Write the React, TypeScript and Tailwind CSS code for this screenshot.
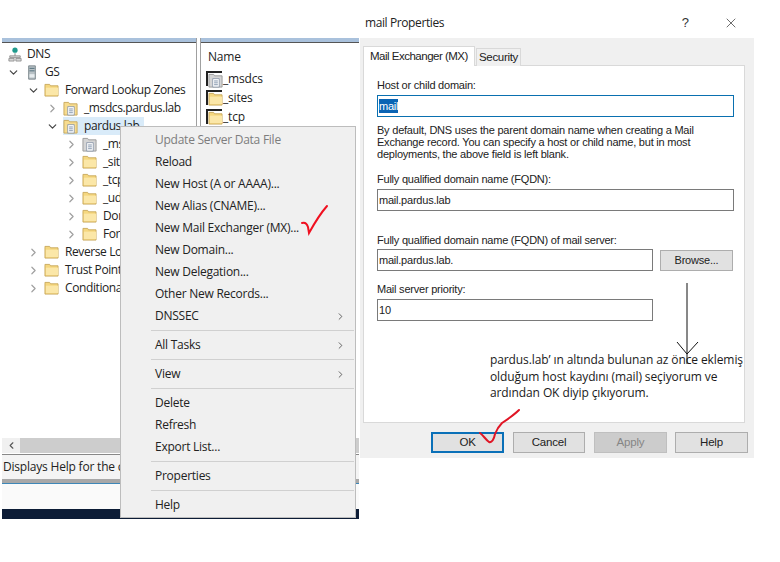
import { ChevronDown, ChevronRight, X } from "lucide-react";

const uiFont = "font-['Open_Sans',sans-serif]";

const Folder = ({ className = "" }: { className?: string }) => (
  <svg viewBox="0 0 16 15" className={`w-[15px] h-[14px] shrink-0 ${className}`}>
    <path d="M1 3V1.5h5L7 3h8v11H1z" fill="#f5d77f" stroke="#c9a95c" strokeWidth="1" />
    <path d="M2 5h13v8H2z" fill="#fbe7a8" />
  </svg>
);

const ZoneFolder = ({ grey = false }: { grey?: boolean }) => (
  <svg viewBox="0 0 16 16" className="w-[15px] h-[15px] shrink-0">
    <path d="M1 3V1.5h5L7 3h8v12H1z" fill={grey ? "#d5d5d5" : "#f7dc8f"} stroke={grey ? "#9a9a9a" : "#c9a95c"} />
    <path d="M5 6h7v9H5z" fill="#fff" stroke="#7f8ea3" strokeWidth="0.8" />
    <path d="M6.5 8.5h4M6.5 10.5h4M6.5 12.5h4" stroke="#5b7391" strokeWidth="0.8" />
  </svg>
);

const ServerIcon = () => (
  <svg viewBox="0 0 12 18" className="w-[10px] h-[17px] shrink-0">
    <path d="M2 1h8v16H2z" fill="#b9c2c6" stroke="#6e7a80" />
    <path d="M3 4h6M3 7h6" stroke="#3f5f6d" />
    <path d="M3 11h6v4H3z" fill="#e7ecee" />
  </svg>
);

const DnsIcon = () => (
  <svg viewBox="0 0 16 17" className="w-[14px] h-[15px] shrink-0">
    <circle cx="8" cy="3.5" r="3" fill="#1f9a8d" />
    <path d="M8 7v3" stroke="#777" />
    <path d="M2 10h12v2H2zM1 13h6v3H1zM9 13h6v3H9z" fill="#d6d6d6" stroke="#7b7b7b" strokeWidth="0.8" />
  </svg>
);

type Row = { label: string; indent: number; chevron: "open" | "closed" | "none"; icon: "dns" | "server" | "folder" | "zone" | "grey"; selected?: boolean };

const rows: Row[] = [
  { label: "GS", indent: 5, chevron: "open", icon: "server" },
  { label: "Forward Lookup Zones", indent: 25, chevron: "open", icon: "folder" },
  { label: "_msdcs.pardus.lab", indent: 44, chevron: "closed", icon: "zone" },
  { label: "pardus.lab", indent: 44, chevron: "open", icon: "zone", selected: true },
  { label: "_msdcs", indent: 63, chevron: "closed", icon: "grey" },
  { label: "_sites", indent: 63, chevron: "closed", icon: "folder" },
  { label: "_tcp", indent: 63, chevron: "closed", icon: "folder" },
  { label: "_udp", indent: 63, chevron: "closed", icon: "folder" },
  { label: "DomainDnsZones", indent: 63, chevron: "closed", icon: "folder" },
  { label: "ForestDnsZones", indent: 63, chevron: "closed", icon: "folder" },
  { label: "Reverse Lookup Zones", indent: 25, chevron: "closed", icon: "folder" },
  { label: "Trust Points", indent: 25, chevron: "closed", icon: "folder" },
  { label: "Conditional Forwarders", indent: 25, chevron: "closed", icon: "folder" },
];

const TreeRow = ({ row }: { row: Row }) => (
  <div className="flex h-[18px] items-center" style={{ paddingLeft: row.indent }}>
    <span className="w-[13px] shrink-0 mr-[4px]">
      {row.chevron === "open" && <ChevronDown size={13} strokeWidth={2.2} className="text-[#444]" />}
      {row.chevron === "closed" && <ChevronRight size={13} strokeWidth={2.2} className="text-[#a0a0a0]" />}
    </span>
    <span className={`flex items-center h-[18px] ${row.selected ? "bg-[#d9ebf9]" : ""} pr-[4px]`}>
      <span className="w-[15px] mr-[6px] flex justify-center">
        {row.icon === "server" && <ServerIcon />}
        {row.icon === "folder" && <Folder />}
        {row.icon === "zone" && <ZoneFolder />}
        {row.icon === "grey" && <ZoneFolder grey />}
      </span>
      <span className="text-[12px] tracking-[-0.4px] text-[#222] whitespace-nowrap">{row.label}</span>
    </span>
  </div>
);

type Item = { label: string; disabled?: boolean; arrow?: boolean; sep?: boolean };

const menu: Item[] = [
  { label: "Update Server Data File", disabled: true },
  { label: "Reload" },
  { label: "New Host (A or AAAA)..." },
  { label: "New Alias (CNAME)..." },
  { label: "New Mail Exchanger (MX)..." },
  { label: "New Domain..." },
  { label: "New Delegation..." },
  { label: "Other New Records..." },
  { label: "DNSSEC", arrow: true, sep: true },
  { label: "All Tasks", arrow: true, sep: true },
  { label: "View", arrow: true, sep: true },
  { label: "Delete" },
  { label: "Refresh" },
  { label: "Export List...", sep: true },
  { label: "Properties", sep: true },
  { label: "Help" },
];

const ContextMenu = () => (
  <div className="absolute left-[118px] top-[88px] w-[236px] h-[392px] bg-[#f0f0f0] border border-[#bdbdbd] pt-[2px]">
    {menu.map((item) => (
      <div key={item.label}>
        <div className={`flex h-[22px] items-center pl-[34px] pr-[9px] justify-between text-[12px] tracking-[-0.25px] ${item.disabled ? "text-[#7d7d7d]" : "text-[#222]"}`}>
          <span>{item.label}</span>
          {item.arrow && <ChevronRight size={11} strokeWidth={1.6} className="text-[#333]" />}
        </div>
        {item.sep && (
          <div className="flex h-[7px] items-center pl-[30px] pr-[1px]">
            <div className="h-px w-full bg-[#d0d0d0]" />
          </div>
        )}
      </div>
    ))}
  </div>
);

const MmcWindow = () => (
  <div className={`absolute left-[2px] top-[38px] w-[357px] h-[481px] flex flex-col ${uiFont}`}>
    <div className="flex h-[400px] shrink-0 gap-[3px]">
      <div className="w-[195px] border-r border-[#a0a0a0] bg-white flex flex-col">
        <div className="h-[5px] bg-[#a9c1dc] border-b border-[#555]" />
        <div className="pt-[2px] overflow-hidden">
          <div className="flex h-[18px] items-center pl-[6px]">
            <DnsIcon />
            <span className="ml-[5px] text-[12px] tracking-[-0.35px] text-[#222]">DNS</span>
          </div>
          {rows.map((r) => <TreeRow key={r.label} row={r} />)}
        </div>
      </div>
      <div className="flex-1 border-l border-[#a0a0a0] bg-white flex flex-col">
        <div className="h-[5px] bg-[#a9c1dc] border-b border-[#555]" />
        <div className="pl-[7px] pt-[5px] text-[12px] tracking-[-0.2px] text-[#222]">Name</div>
        <div className="pl-[5px] pt-[3px]">
          {["_msdcs", "_sites", "_tcp"].map((n) => (
            <div key={n} className="flex h-[19px] items-center gap-[1px]">
              <span className="w-[16px] h-[15px] border-l-[2px] border-t-[2px] border-[#222] flex">
                {n === "_msdcs" ? <ZoneFolder grey /> : <Folder />}
              </span>
              <span className="text-[12px] tracking-[-0.2px] text-[#222]">{n}</span>
            </div>
          ))}
        </div>
      </div>
    </div>
    <div className="h-[15px] shrink-0 bg-[#cdcdcd] flex">
      <div className="w-[18px] bg-[#f0f0f0] flex items-center justify-center">
        <ChevronRight size={11} strokeWidth={2.4} className="rotate-180 text-[#555]" />
      </div>
    </div>
    <div className="h-[2px] shrink-0 bg-white border-b border-[#888]" />
    <div className="h-[24px] shrink-0 bg-[#f4f4f4] text-[12px] tracking-[-0.2px] text-[#222] pl-[1px] flex items-center whitespace-nowrap">Displays Help for the current</div>
    <div className="h-[4px] shrink-0 bg-[#a8a8a8]" />
    <div className="h-px shrink-0 bg-[#3d87b8]" />
    <div className="h-[25px] shrink-0 bg-[#fafafa]" />
    <div className="flex-1 bg-[#0c1c36]" />
    <ContextMenu />
  </div>
);

const Field = ({ value, width, selected = false }: { value: string; width: string; selected?: boolean }) => (
  <div className={`${width} h-[22px] bg-white flex items-center px-[1px] border ${selected ? "border-[#0a70b0]" : "border-[#7a7a7a]"}`}>
    <span className={`text-[11px] leading-[14px] ${selected ? "bg-[#0a64b4] text-white" : "text-[#222]"}`}>{value}</span>
  </div>
);

const DialogButton = ({ label, width, variant = "normal" }: { label: string; width: string; variant?: "normal" | "default" | "disabled" }) => {
  const styles = {
    normal: "bg-[#e1e1e1] border-[#adadad] text-[#222] border",
    default: "bg-[#e1e1e1] border-[#0a70b8] text-[#222] border-2",
    disabled: "bg-[#cccccc] border-[#bfbfbf] text-[#858585] border",
  }[variant];
  return <div className={`${width} h-[21px] flex items-center justify-center text-[11.5px] tracking-[-0.2px] ${styles}`}>{label}</div>;
};

const PropertiesDialog = () => (
  <div className="absolute left-[360px] top-[10px] w-[394px] font-['Liberation_Sans',sans-serif]">
    <div className="h-[28px] bg-white flex items-center justify-between pb-[3px]">
      <span className={`pl-[5px] text-[12px] tracking-[-0.4px] text-[#222] ${uiFont}`}>mail Properties</span>
      <div className="flex items-center">
        <span className="text-[13px] text-[#333] mr-[34px]">?</span>
        <X size={16} strokeWidth={1} className="mr-[15px] text-[#222]" />
      </div>
    </div>
    <div className="h-[420px] bg-[#f0f0f0] pl-[3px] pt-[8px]">
      <div className="flex items-end h-[20px] relative z-10">
        <div className="w-[112px] h-[20px] bg-white border border-b-0 border-[#d9d9d9] text-[11.5px] tracking-[-0.5px] text-[#222] pl-[6px] flex items-center whitespace-nowrap">Mail Exchanger (MX)</div>
        <div className="ml-px w-[45px] h-[18px] bg-[#f0f0f0] border border-b-0 border-[#d9d9d9] text-[11.5px] tracking-[-0.3px] text-[#222] flex items-center justify-center">Security</div>
      </div>
      <div className="w-[382px] h-[358px] -mt-px bg-white border border-[#d9d9d9] pl-[13px] pt-[13px] text-[11px] tracking-[-0.22px] leading-[12px] text-[#222]">
        <p className="h-[12px]">Host or child domain:</p>
        <div className="mt-[4px]"><Field value="mail" width="w-[357px]" selected /></div>
        <p className="mt-[7px] w-[352px]">By default, DNS uses the parent domain name when creating a Mail Exchange record. You can specify a host or child name, but in most deployments, the above field is left blank.</p>
        <p className="mt-[13px] h-[12px]">Fully qualified domain name (FQDN):</p>
        <div className="mt-[4px]"><Field value="mail.pardus.lab" width="w-[357px]" /></div>
        <p className="mt-[23px] h-[12px]">Fully qualified domain name (FQDN) of mail server:</p>
        <div className="mt-[3px] flex gap-[7px] items-center">
          <Field value="mail.pardus.lab." width="w-[276px]" />
          <div className="w-[73px] h-[21px] bg-[#e1e1e1] border border-[#adadad] flex items-center justify-center">Browse...</div>
        </div>
        <p className="mt-[12px] h-[12px]">Mail server priority:</p>
        <div className="mt-[4px]"><Field value="10" width="w-[276px]" /></div>
      </div>
      <div className="flex pl-[68px] pt-[9px]">
        <DialogButton label="OK" width="w-[73px]" variant="default" />
        <div className="ml-[9px]"><DialogButton label="Cancel" width="w-[72px]" /></div>
        <div className="ml-[9px]"><DialogButton label="Apply" width="w-[73px]" variant="disabled" /></div>
        <div className="ml-[8px]"><DialogButton label="Help" width="w-[73px]" /></div>
      </div>
    </div>
  </div>
);

export default function App() {
  return (
    <div className="relative w-[780px] h-[562px] bg-white overflow-hidden">
      <MmcWindow />
      <PropertiesDialog />

      <p className="absolute left-[490px] top-[352px] w-[262px] font-['Open_Sans',sans-serif] text-[12px] leading-[16.5px] tracking-[-0.1px] text-[#1a1a1a] whitespace-nowrap">
        pardus.lab’ ın altında bulunan az önce eklemiş<br />
        olduğum host kaydını (mail) seçiyorum ve<br />
        ardından OK diyip çıkıyorum.
      </p>

      {/* hand drawn marks */}
      <svg className="absolute left-0 top-0 w-[780px] h-[562px] pointer-events-none" viewBox="0 0 780 562" fill="none">
        <path d="M302 223c3-1 5 1 6 4l1 6c5-9 11-19 18-27" stroke="#f01020" strokeWidth="2" strokeLinecap="round" />
        <path d="M687 283v81M677 342l10 12 11-12" stroke="#111" strokeWidth="1" />
        <path d="M480 433c3 2 6 7 9 9 3 1 5-3 6-8 2-5 5-9 7-11 6-4 12-8 17-13" stroke="#e01525" strokeWidth="2" strokeLinecap="round" />
      </svg>
    </div>
  );
}
